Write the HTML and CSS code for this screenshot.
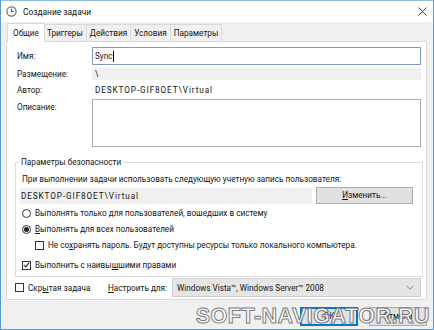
FILE: index.html
```html
<!DOCTYPE html>
<html lang="ru">
<head>
<meta charset="utf-8">
<link rel="stylesheet" href="styles.css">
</head>
<body>
<div class="window">
  <div class="titlebar">
    <svg class="appicon" width="11" height="11" viewBox="0 0 12 12">
      <circle cx="6" cy="6" r="5" fill="#fff" stroke="#6b6b6b" stroke-width="1.3"/>
      <path d="M6 3 V6 H8.5" fill="none" stroke="#555" stroke-width="1.2"/>
    </svg>
    <span class="title">Создание задачи</span>
    <svg class="close" width="9" height="9" viewBox="0 0 10 10">
      <path d="M0.5 0.5 L9.5 9.5 M9.5 0.5 L0.5 9.5" stroke="#333" stroke-width="1"/>
    </svg>
  </div>
  <div class="client">
    <div class="tabs">
      <div class="tab active">Общие</div>
      <div class="tab">Триггеры</div>
      <div class="tab">Действия</div>
      <div class="tab">Условия</div>
      <div class="tab">Параметры</div>
    </div>
    <div class="panel">
      <div class="row r-name">
        <span class="lbl">Имя:</span>
        <div class="input focus">Sync<span class="caret"></span></div>
      </div>
      <div class="row r-loc">
        <span class="lbl">Размещение:</span>
        <div class="rofield">\</div>
      </div>
      <div class="row r-author">
        <span class="lbl">Автор:</span>
        <div class="plain caps">DESKTOP-GIF8OET\Virtual</div>
      </div>
      <div class="row r-desc">
        <span class="lbl">Описание:</span>
        <div class="textarea"></div>
      </div>
      <div class="group">
        <div class="legend">Параметры безопасности</div>
        <div class="g-text">При выполнении задачи использовать следующую учетную запись пользователя:</div>
        <div class="acct">
          <div class="acctfield caps">DESKTOP-GIF8OET\Virtual</div>
          <div class="btn change"><u>И</u>зменить...</div>
        </div>
        <div class="opt first">
          <span class="radio"></span>
          <span>Выполнять только для пользователей, вошедших в систему</span>
        </div>
        <div class="opt">
          <span class="radio on"></span>
          <span><u>В</u>ыполнять для всех пользователей</span>
        </div>
        <div class="opt indent">
          <span class="check"></span>
          <span>Не со<u>х</u>ранять пароль. Будут доступны ресурсы только локального компьютера.</span>
        </div>
        <div class="opt high">
          <span class="check on"><svg width="8" height="8" viewBox="0 0 9 9"><path d="M1 4.5 L3.5 7 L8 1.5" fill="none" stroke="#222" stroke-width="1.3"/></svg></span>
          <span>Выполнить с наивы<u>ш</u>шими правами</span>
        </div>
      </div>
      <div class="bottomrow">
        <div class="opt hidden">
          <span class="check"></span>
          <span>Скр<u>ы</u>тая задача</span>
        </div>
        <span class="cfg"><u>Н</u>астроить для:</span>
        <div class="select">
          <span>Windows Vista™, Windows Server™ 2008</span>
          <svg width="8" height="5" viewBox="0 0 9 6"><path d="M0.5 1 L4.5 5 L8.5 1" fill="none" stroke="#777" stroke-width="1"/></svg>
        </div>
      </div>
    </div>
    <div class="buttons">
      <div class="btn ok">ОК</div>
      <div class="btn cancel">Отмена</div>
    </div>
    <div class="watermark">SOFT-NAVIGATOR.RU</div>
  </div>
</div>
</body>
</html>
```

FILE: styles.css
```css
* { box-sizing: border-box; }
html, body { margin: 0; padding: 0; background: #fff; }
body {
  font-family: Roboto, "Noto Sans", sans-serif;
  font-size: 8.2px;
  color: #151515;
  white-space: nowrap;
}
u { text-decoration: underline; text-underline-offset: 1px; }
.caps { letter-spacing: 0.9px; }
.window {
  width: 434px;
  height: 330px;
  border: 1px solid #5b9bd5;
  border-top-color: #8cbbe3;
  display: flex;
  flex-direction: column;
  overflow: hidden;
}
.titlebar {
  height: 21px;
  flex: none;
  background: #fff;
  display: flex;
  align-items: center;
  padding-left: 5px;
  padding-right: 6px;
}
.title { margin-left: 6px; font-size: 8.4px; color: #111; }
.close { margin-left: auto; }
.client {
  flex: 1;
  background: #f0f0f0;
  position: relative;
  padding: 1px 5px 0 5px;
  display: flex;
  flex-direction: column;
}
.tabs {
  display: flex;
  height: 18px;
  flex: none;
  align-items: flex-end;
  padding-left: 3px;
  position: relative;
  z-index: 1;
}
.tab {
  height: 17px;
  line-height: 16px;
  padding: 0 3px;
  border: 1px solid #d9d9d9;
  border-bottom: none;
  margin-left: -1px;
  background: #f0f0f0;
}
.tab.active {
  height: 19px;
  line-height: 18px;
  background: #fff;
  padding: 0 5px;
  margin-left: -2px;
  margin-right: -1px;
  margin-bottom: -1px;
  position: relative;
  z-index: 2;
}
.panel {
  background: #fff;
  border: 1px solid #d9d9d9;
  width: 421px;
  height: 259px;
  flex: none;
  padding: 5px 5px 0 10px;
}
.row { display: flex; align-items: center; }
.lbl { width: 75px; flex: none; }
.r-name { height: 18px; }
.input {
  flex: 1;
  height: 18px;
  border: 1px solid #7a9cc6;
  padding: 0 2px;
  display: flex;
  align-items: center;
}
.caret { display: inline-block; width: 1px; height: 11px; background: #000; }
.r-loc { margin-top: 3px; height: 12px; }
.rofield {
  flex: 1;
  height: 12px;
  background: #f0f0f0;
  padding-left: 3px;
  line-height: 12px;
}
.r-author { margin-top: 3px; height: 14px; }
.plain { padding-left: 3px; }
.r-desc { margin-top: 2px; align-items: flex-start; }
.r-desc .lbl { margin-top: 3px; }
.textarea {
  flex: 1;
  height: 48px;
  border: 1px solid #adadad;
  background: #fff;
}
.group {
  position: relative;
  margin: 15px 0 0 -2px;
  width: 408px;
  height: 115px;
  border: 1px solid #dcdcdc;
  padding: 10px 0 0 6px;
}
.legend {
  position: absolute;
  top: -7px;
  left: 3px;
  background: #fff;
  padding: 0 2px;
  line-height: 12px;
}
.g-text { height: 12px; line-height: 12px; }
.acct { display: flex; align-items: center; margin-top: 2px; margin-left: -2px; }
.acctfield {
  width: 292px;
  height: 16px;
  background: #f0f0f0;
  line-height: 16px;
  padding-left: 1px;
}
.btn {
  background: #e1e1e1;
  border: 1px solid #adadad;
  text-align: center;
}
.change { width: 97px; height: 17px; line-height: 15px; margin-left: 4px; }
.opt { display: flex; align-items: center; height: 16px; }
.opt.first { margin-top: 1px; }
.opt > span:last-child { margin-left: 4px; }
.indent { padding-left: 13px; }
.high { margin-top: 4px; }
.radio {
  width: 9px; height: 9px;
  border: 1px solid #333;
  border-radius: 50%;
  background: #fff;
  display: inline-flex;
  align-items: center;
  justify-content: center;
  flex: none;
}
.radio.on::after {
  content: "";
  width: 5px; height: 5px;
  border-radius: 50%;
  background: #222;
}
.check {
  width: 9px; height: 9px;
  border: 1px solid #333;
  background: #fff;
  flex: none;
  display: inline-flex;
  align-items: center;
  justify-content: center;
}
.bottomrow {
  display: flex;
  align-items: center;
  margin-top: 1px;
  margin-left: -2px;
  height: 19px;
}
.hidden { width: 93px; flex: none; }
.cfg { width: 64px; flex: none; }
.select {
  width: 249px;
  flex: none;
  height: 19px;
  background: #e5e5e5;
  border: 1px solid #d0d0d0;
  display: flex;
  align-items: center;
  justify-content: space-between;
  padding: 0 6px 0 4px;
}
.buttons {
  display: flex;
  justify-content: flex-end;
  gap: 11px;
  margin-top: 7px;
  padding-right: 1px;
}
.ok, .cancel { height: 19px; line-height: 17px; width: 58px; }
.ok { border: 1px solid #0078d7; box-shadow: inset 0 0 0 1px #0078d7; }
.watermark {
  position: absolute;
  right: 3px;
  bottom: 0px;
  font-family: "Liberation Sans", Arial, sans-serif;
  font-weight: bold;
  font-size: 21.5px;
  letter-spacing: 0.5px;
  color: #fff;
  -webkit-text-stroke: 1px #6a6a6a;
  opacity: 0.85;
}
```
